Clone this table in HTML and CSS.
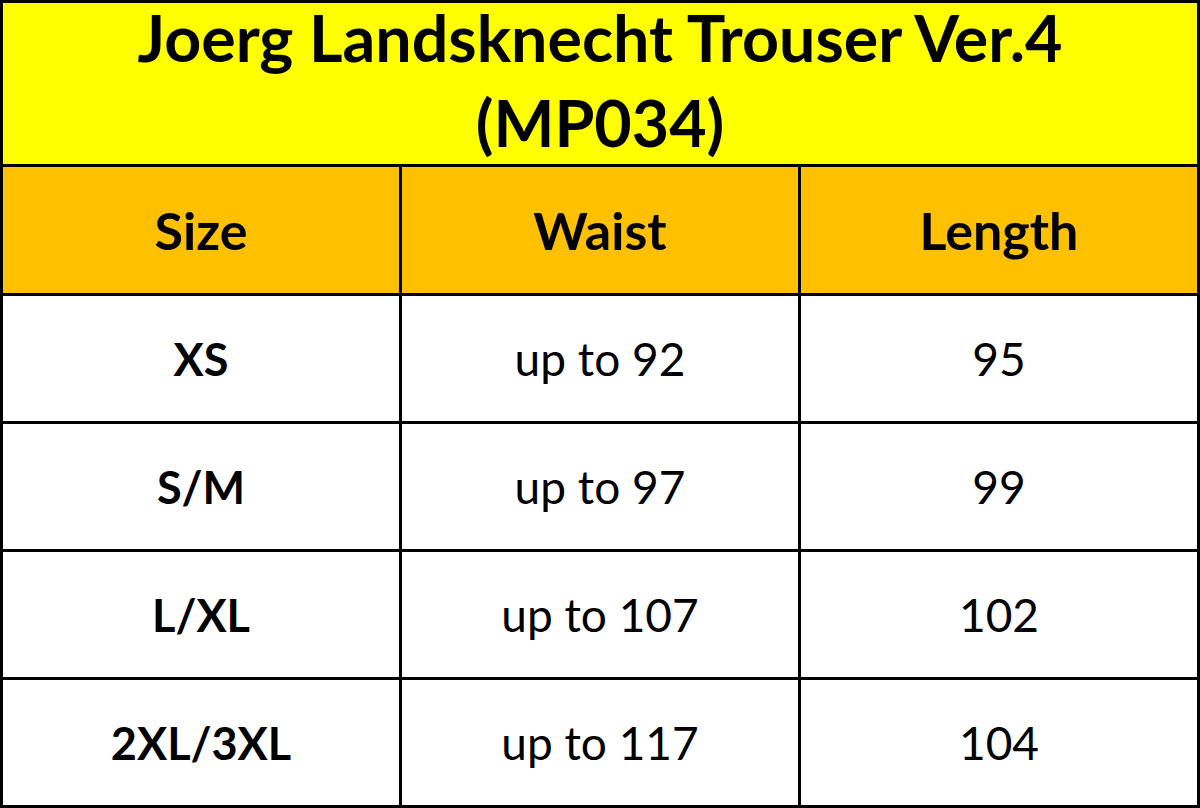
FILE: index.html
```html
<!DOCTYPE html>
<html lang="en">
<head>
<meta charset="utf-8">
<title>Joerg Landsknecht Trouser Ver.4 (MP034)</title>
<link rel="stylesheet" href="styles.css">
</head>
<body>
<div class="chart">
  <div class="cell title">
    <span class="title-line">Joerg Landsknecht Trouser Ver.4</span>
    <span class="title-line">(MP034)</span>
  </div>
  <div class="cell head">Size</div>
  <div class="cell head">Waist</div>
  <div class="cell head">Length</div>
  <div class="cell size">XS</div>
  <div class="cell val">up to 92</div>
  <div class="cell val">95</div>
  <div class="cell size">S/M</div>
  <div class="cell val">up to 97</div>
  <div class="cell val">99</div>
  <div class="cell size">L/XL</div>
  <div class="cell val">up to 107</div>
  <div class="cell val">102</div>
  <div class="cell size">2XL/3XL</div>
  <div class="cell val">up to 117</div>
  <div class="cell val">104</div>
</div>
</body>
</html>
```
FILE: styles.css
```css
html, body {
  margin: 0;
  padding: 0;
  background: #ffffff;
}
.chart {
  width: 1200px;
  height: 808px;
  box-sizing: border-box;
  background: #000000;
  padding: 3px;
  display: grid;
  grid-template-columns: 396px 396px 396px;
  grid-template-rows: 161px 126px 125px 125px 125px 125px;
  gap: 3px;
  font-family: Lato, "Open Sans", "DejaVu Sans", sans-serif;
  color: #000000;
}
.cell {
  display: flex;
  align-items: center;
  justify-content: center;
  text-align: center;
  background: #ffffff;
  white-space: nowrap;
}
.title {
  grid-column: 1 / 4;
  background: #ffff00;
  flex-direction: column;
  gap: 20px;
  font-weight: 700;
  font-size: 64.5px;
  line-height: 1;
  padding-bottom: 8px;
}
.title-line {
  display: block;
}
.head {
  background: #ffc000;
  font-weight: 700;
  font-size: 52px;
}
.size {
  font-weight: 700;
  font-size: 45px;
}
.val {
  font-weight: 400;
  font-size: 46px;
}
```
